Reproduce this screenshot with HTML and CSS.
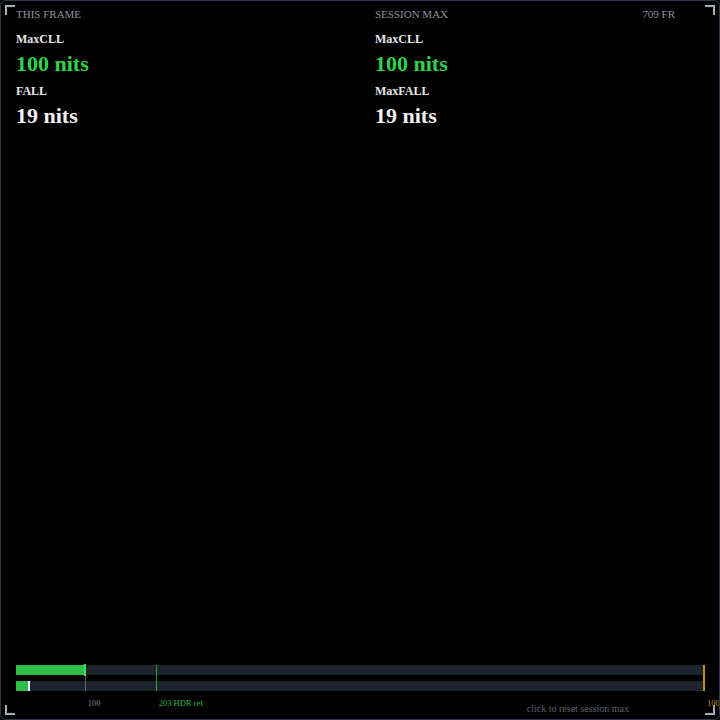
FILE: index.html
```html
<!DOCTYPE html>
<html lang="en">
<head>
    <meta charset="UTF-8">
    <title>HDR Levels</title>
    <link rel="stylesheet" href="styles.css">
</head>
<body>

    <div class="panel">
        <!-- corner brackets -->
        <span class="corner tl"></span>
        <span class="corner tr"></span>
        <span class="corner bl"></span>
        <span class="corner br"></span>

        <span class="frame-count">709 FR</span>

        <!-- Readouts -->
        <div class="readouts">
            <div class="column">
                <h2 class="column-title">THIS FRAME</h2>
                <div class="metric">
                    <div class="metric-label">MaxCLL</div>
                    <div class="metric-value green">100 nits</div>
                </div>
                <div class="metric">
                    <div class="metric-label">FALL</div>
                    <div class="metric-value">19 nits</div>
                </div>
            </div>
            <div class="column">
                <h2 class="column-title">SESSION MAX</h2>
                <div class="metric">
                    <div class="metric-label">MaxCLL</div>
                    <div class="metric-value green">100 nits</div>
                </div>
                <div class="metric">
                    <div class="metric-label">MaxFALL</div>
                    <div class="metric-value">19 nits</div>
                </div>
            </div>
        </div>

        <!-- Meter -->
        <div class="meter">
            <div class="bars">
                <div class="bar">
                    <div class="bar-fill" style="width: 10%"></div>
                    <span class="peak" style="left: 10%"></span>
                </div>
                <div class="bar">
                    <div class="bar-fill" style="width: 1.9%"></div>
                    <span class="peak peak-white" style="left: 1.9%"></span>
                </div>
                <span class="tick tick-grey" style="left: 10%"></span>
                <span class="tick tick-green" style="left: 20.3%"></span>
                <span class="tick tick-orange" style="left: 100%"></span>
            </div>
            <div class="scale">
                <span class="scale-label" style="left: 10%">100</span>
                <span class="scale-label label-green" style="left: 20.3%">203 HDR ref</span>
                <span class="scale-label label-orange" style="left: 100%">1000</span>
                <span class="reset">click to reset session max</span>
            </div>
        </div>
    </div>

</body>
</html>
```

FILE: styles.css
```css
/* Basic resets */
* {
    margin: 0;
    padding: 0;
    box-sizing: border-box;
}

body {
    background-color: #000;
    font-family: "Liberation Serif", "Times New Roman", serif;
    color: #eee;
}

.panel {
    position: relative;
    width: 720px;
    height: 720px;
    border: 1px solid #2c3541;
    border-radius: 6px;
    background-color: #000;
    overflow: hidden;
    display: flex;
    flex-direction: column;
    padding: 6px 15px 0 15px;
}

/* Corner brackets */
.corner {
    position: absolute;
    width: 10px;
    height: 10px;
    border-color: #a3aab3;
    border-style: solid;
    border-width: 0;
}

.corner.tl { top: 4px; left: 4px; border-top-width: 2px; border-left-width: 2px; }
.corner.tr { top: 4px; right: 4px; border-top-width: 2px; border-right-width: 2px; }
.corner.bl { bottom: 4px; left: 4px; border-bottom-width: 2px; border-left-width: 2px; }
.corner.br { bottom: 4px; right: 4px; border-bottom-width: 2px; border-right-width: 2px; }

.frame-count {
    position: absolute;
    top: 6px;
    right: 44px;
    font-size: 11px;
    line-height: 14px;
    color: #8d939b;
}

/* Readouts */
.readouts {
    display: grid;
    grid-template-columns: 1fr 1fr;
    column-gap: 30px;
}

.column-title {
    font-size: 11px;
    line-height: 14px;
    font-weight: normal;
    color: #8d939b;
    margin-bottom: 10px;
}

.metric + .metric {
    margin-top: 5px;
}

.metric-label {
    font-size: 12px;
    line-height: 16px;
    font-weight: bold;
    color: #e8e8e8;
}

.metric-value {
    font-size: 22px;
    line-height: 28px;
    font-weight: bold;
    color: #f2f2f2;
    margin-top: 3px;
}

.metric-value.green {
    color: #2fd24b;
}

/* Meter */
.meter {
    margin-top: auto;
}

.bars {
    position: relative;
    display: flex;
    flex-direction: column;
    gap: 6px;
}

.bar {
    position: relative;
    height: 10px;
    background-color: #1b232e;
}

.bar-fill {
    height: 100%;
    background-color: #2fbf49;
}

.peak {
    position: absolute;
    top: -1px;
    bottom: -1px;
    width: 2px;
    margin-left: -1px;
    background-color: #3ee05c;
    z-index: 2;
}

.peak-white {
    top: 0;
    bottom: 0;
    background-color: #f4f4f4;
}

.tick {
    position: absolute;
    top: 0;
    bottom: 0;
    width: 1px;
    z-index: 1;
}

.tick-grey { background-color: #5d646d; }
.tick-green { background-color: #23a83c; }
.tick-orange { background-color: #c98a10; width: 2px; margin-left: -1px; }

.scale {
    position: relative;
    height: 28px;
    display: flex;
    justify-content: flex-end;
    padding: 12px 75px 0 0;
}

.scale-label {
    position: absolute;
    top: 7px;
    margin-left: 3px;
    font-size: 8.5px;
    line-height: 10px;
    color: #7c838b;
    white-space: nowrap;
}

.label-green { color: #28b545; }
.label-orange { color: #c98a10; }

.reset {
    font-size: 10px;
    line-height: 12px;
    color: #5f656c;
    cursor: pointer;
}
```
